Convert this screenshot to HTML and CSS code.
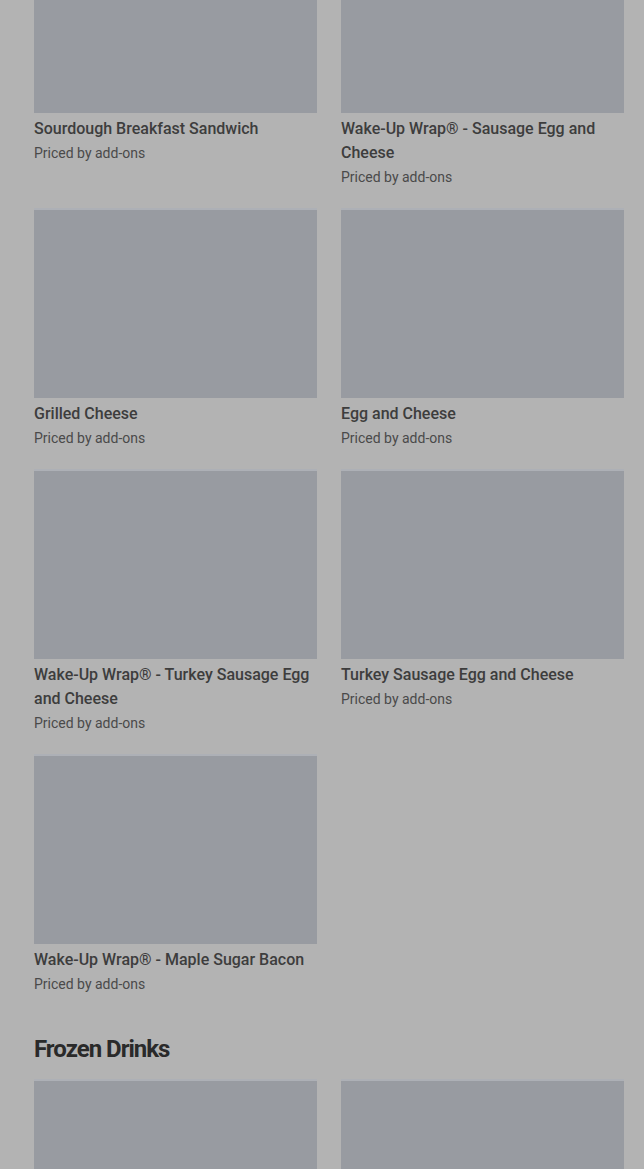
FILE: index.html
```html
<!DOCTYPE html>
<html>
<head>
<meta charset="utf-8">
<link rel="stylesheet" href="styles.css">
</head>
<body>
<main class="page">
  <section class="grid">
    <div class="card"><div class="thumb"></div><div class="title">Sourdough Breakfast Sandwich</div><div class="sub">Priced by add-ons</div></div>
    <div class="card"><div class="thumb"></div><div class="title">Wake-Up Wrap® - Sausage Egg and Cheese</div><div class="sub">Priced by add-ons</div></div>
    <div class="card"><div class="thumb"></div><div class="title">Grilled Cheese</div><div class="sub">Priced by add-ons</div></div>
    <div class="card"><div class="thumb"></div><div class="title">Egg and Cheese</div><div class="sub">Priced by add-ons</div></div>
    <div class="card"><div class="thumb"></div><div class="title">Wake-Up Wrap® - Turkey Sausage Egg and Cheese</div><div class="sub">Priced by add-ons</div></div>
    <div class="card"><div class="thumb"></div><div class="title">Turkey Sausage Egg and Cheese</div><div class="sub">Priced by add-ons</div></div>
    <div class="card"><div class="thumb"></div><div class="title">Wake-Up Wrap® - Maple Sugar Bacon</div><div class="sub">Priced by add-ons</div></div>
  </section>
  <h2 class="section-title">Frozen Drinks</h2>
  <section class="grid">
    <div class="card"><div class="thumb"></div></div>
    <div class="card"><div class="thumb"></div></div>
  </section>
</main>
</body>
</html>
```
FILE: styles.css
```css
html, body {
  margin: 0;
  padding: 0;
  background: #b3b3b3;
  overflow: hidden;
}
.page {
  margin-top: -75px;
  padding: 0 20px 0 34px;
  font-family: Roboto, "Liberation Sans", sans-serif;
}
.grid {
  display: grid;
  grid-template-columns: 283px 283px;
  column-gap: 24px;
  row-gap: 23px;
  align-items: start;
}
.thumb {
  height: 188px;
  background: #989ba1;
  box-shadow: 0 -2px 0 #adb0b6;
}
.title {
  margin-top: 4px;
  font-size: 16px;
  line-height: 24px;
  font-weight: 500;
  color: #3d3d3d;
}
.sub {
  margin-top: 2px;
  font-size: 14px;
  line-height: 20px;
  color: #4a4a4a;
}
.section-title {
  margin: 39px 0 16px;
  font-size: 24px;
  line-height: 32px;
  font-weight: 700;
  letter-spacing: -1px;
  color: #2a2a2a;
}
```
